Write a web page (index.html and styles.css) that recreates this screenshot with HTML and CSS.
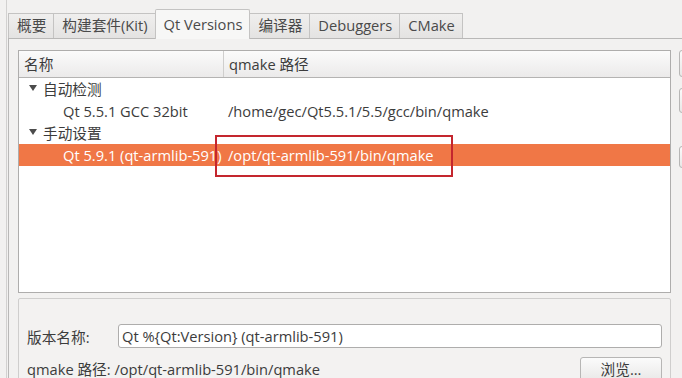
FILE: index.html
```html
<!DOCTYPE html>
<html lang="zh-CN">
<head>
    <meta charset="UTF-8">
    <title>Qt Versions</title>
    <link rel="stylesheet" href="styles.css">
</head>
<body>
    <div class="window">
        <!-- 选项卡 -->
        <div class="tabbar">
            <div class="tab">概要</div>
            <div class="tab">构建套件(Kit)</div>
            <div class="tab active">Qt Versions</div>
            <div class="tab">编译器</div>
            <div class="tab">Debuggers</div>
            <div class="tab">CMake</div>
        </div>
        <div class="pane">
            <div class="main">
                <div class="left">
                    <!-- 版本列表 -->
                    <div class="tree">
                        <div class="tree-head">
                            <div class="col1">名称</div>
                            <div class="col2">qmake 路径</div>
                        </div>
                        <div class="row">
                            <div class="col1 level0"><span class="arrow"></span>自动检测</div>
                            <div class="col2"></div>
                        </div>
                        <div class="row">
                            <div class="col1 level1">Qt 5.5.1 GCC 32bit</div>
                            <div class="col2">/home/gec/Qt5.5.1/5.5/gcc/bin/qmake</div>
                        </div>
                        <div class="row">
                            <div class="col1 level0"><span class="arrow"></span>手动设置</div>
                            <div class="col2"></div>
                        </div>
                        <div class="row selected">
                            <div class="col1 level1">Qt 5.9.1 (qt-armlib-591)</div>
                            <div class="col2">/opt/qt-armlib-591/bin/qmake</div>
                        </div>
                    </div>
                    <!-- 详细信息 -->
                    <div class="details">
                        <div class="field">
                            <label class="field-label">版本名称:</label>
                            <div class="input">Qt %{Qt:Version} (qt-armlib-591)</div>
                        </div>
                        <div class="field path">
                            <span class="path-text">qmake 路径: /opt/qt-armlib-591/bin/qmake</span>
                            <div class="btn browse">浏览...</div>
                        </div>
                    </div>
                </div>
                <!-- 右侧按钮（超出窗口） -->
                <div class="side">
                    <div class="btn side-btn"></div>
                    <div class="btn side-btn second"></div>
                    <div class="btn side-btn third"></div>
                </div>
            </div>
        </div>
    </div>
    <!-- 红色标注框 -->
    <div class="mark"></div>
</body>
</html>
```

FILE: styles.css
```css
*{
    box-sizing: border-box;
    margin: 0;
    padding: 0;
}

html, body{
    width: 682px;
    height: 378px;
    overflow: hidden;
}

body{
    position: relative;
    background-color: #f2f1f0;
    color: #3c3c3c;
    font-family: "Open Sans", "Noto Sans CJK SC", sans-serif;
    font-size: 14.67px;
}

.window{
    margin-left: 6px;
    padding-left: 1px;
    border-left: 1px solid #d2d1d0;
    height: 378px;
    width: 800px;
}

/* 选项卡 */
.tabbar{
    display: flex;
    align-items: flex-end;
    padding-top: 9px;
    height: 38px;
}
.tab{
    height: 25px;
    line-height: 23px;
    padding: 0 7px 0 8px;
    border: 1px solid #c4c3c2;
    border-bottom: none;
    border-left: none;
    background: linear-gradient(#f0efee, #e4e3e2);
    color: #4a4a4a;
    white-space: nowrap;
}
.tab:first-child{
    border-left: 1px solid #c4c3c2;
}
.tab.active{
    height: 30px;
    line-height: 28px;
    margin-bottom: -1px;
    background: #f7f7f6;
    border-left: 1px solid #c4c3c2;
    margin-left: -1px;
    border-radius: 2px 2px 0 0;
    position: relative;
}

.pane{
    border-top: 1px solid #b9b8b7;
    border-left: 1px solid #b9b8b7;
    padding: 11px 0 0 9px;
    height: 340px;
    background-color: #f2f1f0;
}

.main{
    display: flex;
    gap: 8px;
}
.left{
    width: 653px;
    flex-shrink: 0;
}
.side{
    width: 80px;
    flex-shrink: 0;
}

/* 列表 */
.tree{
    height: 243px;
    border: 1px solid #aeadac;
    background-color: #ffffff;
}
.tree-head{
    display: flex;
    height: 27px;
    line-height: 26px;
    border-bottom: 1px solid #b4b3b2;
    background: linear-gradient(#fbfbfb, #ebeaea);
}
.col1{
    width: 204px;
    padding-left: 5px;
    white-space: nowrap;
}
.col2{
    padding-left: 5px;
    white-space: nowrap;
}
.tree-head .col2{
    flex: 1;
    border-left: 1px solid #cfcecd;
}
.row{
    display: flex;
    height: 22px;
    line-height: 22px;
}
.row .col2{
    padding-left: 5px;
}
.level0{
    display: flex;
    align-items: center;
    padding-left: 10px;
}
.level1{
    padding-left: 44px;
}
.arrow{
    width: 0;
    height: 0;
    border-left: 4px solid transparent;
    border-right: 4px solid transparent;
    border-top: 6px solid #4c4c4c;
    margin-right: 6px;
    margin-top: -2px;
}
.selected{
    background-color: #f07746;
    color: #ffffff;
}

/* 详细信息 */
.details{
    margin-top: 5px;
    height: 100px;
    border: 1px solid #cfcecd;
    border-radius: 2px;
    padding: 25px 8px 0 8px;
    background-color: #f3f2f1;
}
.field{
    display: flex;
    align-items: center;
}
.field-label{
    width: 91px;
}
.input{
    flex: 1;
    height: 24px;
    line-height: 22px;
    padding-left: 3px;
    border: 1px solid #aeadac;
    border-radius: 3px;
    background-color: #ffffff;
}
.field.path{
    justify-content: space-between;
    align-items: flex-start;
    margin-top: 9px;
}
.path-text{
    line-height: 20px;
    margin-top: 2px;
}

.btn{
    height: 26px;
    line-height: 24px;
    text-align: center;
    border: 1px solid #b7b6b5;
    border-radius: 3px;
    background: linear-gradient(#fbfbfb, #e8e7e6);
    color: #3c3c3c;
}
.browse{
    width: 82px;
    line-height: 22px;
}
.side-btn{
    width: 80px;
    height: 27px;
}
.side-btn.second{
    margin-top: 11px;
    height: 25px;
}
.side-btn.third{
    margin-top: 33px;
    height: 22px;
}

/* 标注 */
.mark{
    position: absolute;
    left: 215px;
    top: 135px;
    width: 238px;
    height: 42px;
    border: 2px solid #c4262e;
}
```
